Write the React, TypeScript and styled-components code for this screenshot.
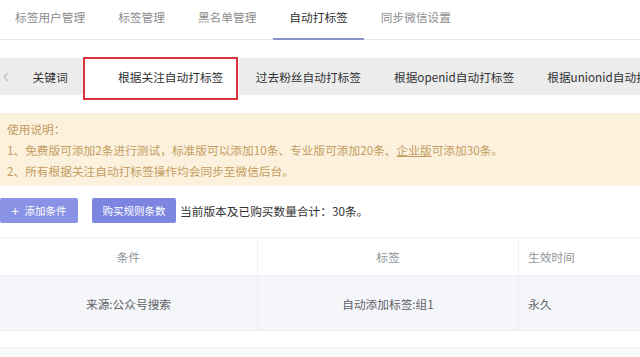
import styled, { createGlobalStyle } from 'styled-components'

const GlobalStyle = createGlobalStyle`
  html, body {
    margin: 0;
    padding: 0;
    background: #fff;
    overflow: hidden;
  }
  body {
    font-family: "Noto Sans CJK SC", "Noto Sans", sans-serif;
    font-size: 11.7px;
    color: #333;
  }
`

const Page = styled.div`
  width: 640px;
  height: 357px;
  overflow: hidden;
  display: flex;
  flex-direction: column;
`

const TopNav = styled.nav`
  display: flex;
  height: 39px;
  border-bottom: 1px solid #e8e8eb;
`

const TopTab = styled.div<{ $active?: boolean }>`
  display: flex;
  align-items: center;
  padding: 0 16.5px 6px;
  margin-bottom: -1px;
  white-space: nowrap;
  color: ${({ $active }) => ($active ? '#303133' : '#8c8c8c')};
  border-bottom: 2px solid ${({ $active }) => ($active ? '#8a92cc' : 'transparent')};
  &:first-child {
    padding-left: 15px;
  }
`

const SubBar = styled.div`
  margin-top: 18px;
  height: 37px;
  display: flex;
  align-items: stretch;
  background: #ececed;
  white-space: nowrap;
`

const Arrow = styled.div`
  width: 16px;
  flex-shrink: 0;
  display: flex;
  align-items: center;
  padding-left: 3px;
  box-sizing: border-box;
`

const SubTab = styled.div<{ $active?: boolean }>`
  position: relative;
  flex-shrink: 0;
  display: flex;
  align-items: center;
  padding: ${({ $active }) => ($active ? '0 16px 0 34px' : '0 16.5px')};
  background: ${({ $active }) => ($active ? '#fff' : 'transparent')};
  color: #303133;
  ${({ $active }) =>
    $active &&
    `
    &::after {
      content: '';
      position: absolute;
      left: -1px;
      right: 1px;
      top: -1px;
      bottom: -5px;
      border: 2px solid #d9343c;
    }
  `}
`

const Notice = styled.div`
  margin-top: 18px;
  padding: 5px 7px;
  background: #fbf1dc;
  color: #c49c60;
  line-height: 21px;
`

const Link = styled.span`
  text-decoration: underline;
`

const Actions = styled.div`
  margin-top: 12px;
  height: 25px;
  display: flex;
  align-items: center;
`

const Button = styled.div<{ $tone: string; $width: number }>`
  width: ${({ $width }) => $width}px;
  height: 25px;
  border-radius: 2px;
  background: ${({ $tone }) => $tone};
  color: #fff;
  font-size: 10.5px;
  display: flex;
  align-items: center;
  justify-content: center;
  gap: 6px;
  & + & {
    margin-left: 14px;
  }
`

const Plus = styled.span`
  font-size: 13px;
  line-height: 1;
`

const Summary = styled.span`
  margin-left: 4px;
  color: #333;
`

const Table = styled.div`
  margin-top: 14px;
  display: grid;
  grid-template-columns: 258px 261px 1fr;
  border-top: 1px solid #f2f2f4;
`

const Cell = styled.div<{ $head?: boolean; $align?: 'center' | 'left'; $last?: boolean }>`
  height: ${({ $head }) => ($head ? '37px' : '54px')};
  display: flex;
  align-items: center;
  justify-content: ${({ $align }) => ($align === 'left' ? 'flex-start' : 'center')};
  padding-left: ${({ $align }) => ($align === 'left' ? '9px' : '0')};
  background: ${({ $head }) => ($head ? '#fff' : '#f5f6fa')};
  color: ${({ $head }) => ($head ? '#909399' : '#606266')};
  border-right: ${({ $last }) => ($last ? 'none' : '1px solid #ebeef5')};
  border-bottom: 1px solid #ebeef5;
`

const Footer = styled.div`
  margin-top: 16px;
  flex: 1;
  border-top: 1px solid #efeff2;
  background: #fafafb;
`

const topTabs = ['标签用户管理', '标签管理', '黑名单管理', '自动打标签', '同步微信设置']
const subTabs = ['关键词', '根据关注自动打标签', '过去粉丝自动打标签', '根据openid自动打标签', '根据unionid自动打标签']

export default function App() {
  return (
    <>
      <GlobalStyle />
      <Page>
        <TopNav>
          {topTabs.map((t) => (
            <TopTab key={t} $active={t === '自动打标签'}>{t}</TopTab>
          ))}
        </TopNav>

        <SubBar>
          <Arrow>
            <svg width="6" height="10" viewBox="0 0 6 10">
              <path d="M5 1 L1 5 L5 9" fill="none" stroke="#bcbcc0" strokeWidth="1.2" />
            </svg>
          </Arrow>
          {subTabs.map((t) => (
            <SubTab key={t} $active={t === '根据关注自动打标签'}>{t}</SubTab>
          ))}
        </SubBar>

        <Notice>
          <div>使用说明：</div>
          <div>1、免费版可添加2条进行测试，标准版可以添加10条、专业版可添加20条、<Link>企业版</Link>可添加30条。</div>
          <div>2、所有根据关注自动打标签操作均会同步至微信后台。</div>
        </Notice>

        <Actions>
          <Button $tone="#8a92e5" $width={78}><Plus>+</Plus>添加条件</Button>
          <Button $tone="#7c86e1" $width={84}>购买规则条数</Button>
          <Summary>当前版本及已购买数量合计：30条。</Summary>
        </Actions>

        <Table>
          <Cell $head>条件</Cell>
          <Cell $head>标签</Cell>
          <Cell $head $align="left" $last>生效时间</Cell>
          <Cell>来源:公众号搜索</Cell>
          <Cell>自动添加标签:组1</Cell>
          <Cell $align="left" $last>永久</Cell>
        </Table>

        <Footer />
      </Page>
    </>
  )
}
